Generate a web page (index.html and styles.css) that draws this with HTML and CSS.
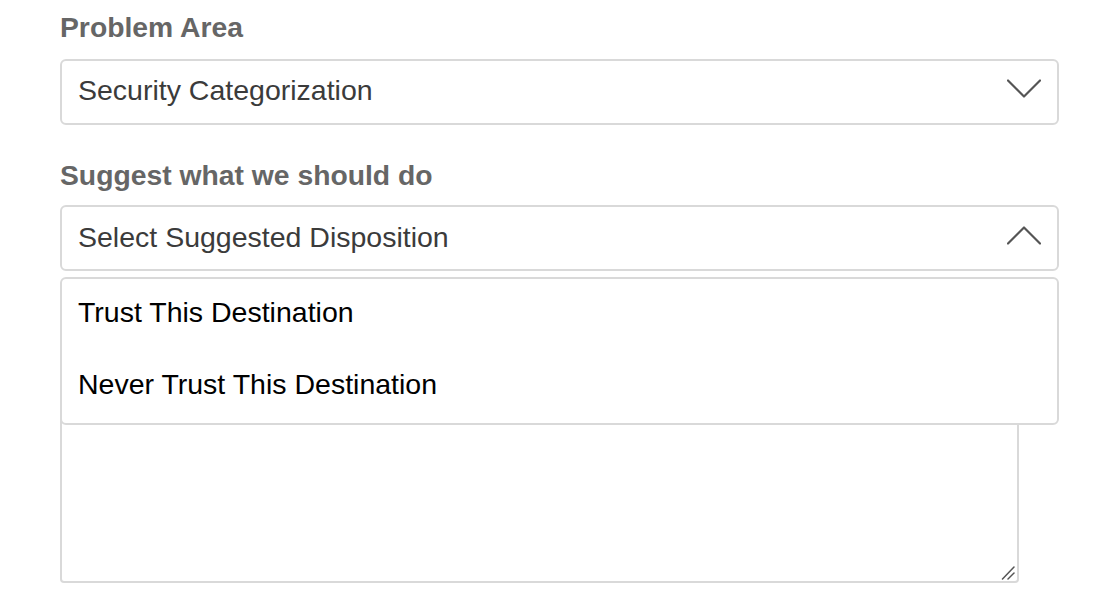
FILE: index.html
```html
<!DOCTYPE html>
<html lang="en">
<head>
<meta charset="utf-8">
<title>Feedback form</title>
<link rel="stylesheet" href="styles.css">
</head>
<body>
<form class="form">
  <div class="field">
    <div class="label">Problem Area</div>
    <div class="select">
      <span class="select-value">Security Categorization</span>
      <svg class="chev" width="34" height="19" viewBox="0 0 34 19"><polyline points="1,1.5 17,17.5 33,1.5" fill="none" stroke="#555" stroke-width="2.2" stroke-linecap="round" stroke-linejoin="round"/></svg>
    </div>
  </div>
  <div class="field field-2">
    <div class="label">Suggest what we should do</div>
    <div class="select-wrap">
      <div class="select open">
        <span class="select-value">Select Suggested Disposition</span>
        <svg class="chev" width="34" height="19" viewBox="0 0 34 19"><polyline points="1,17.5 17,1.5 33,17.5" fill="none" stroke="#555" stroke-width="2.2" stroke-linecap="round" stroke-linejoin="round"/></svg>
      </div>
      <ul class="menu">
        <li class="menu-item">Trust This Destination</li>
        <li class="menu-item">Never Trust This Destination</li>
      </ul>
    </div>
  </div>
  <div class="textarea-wrap">
    <textarea class="textarea"></textarea>
    <svg class="grip" width="16" height="16" viewBox="0 0 16 16"><line x1="1.5" y1="15" x2="13" y2="3" stroke="#555" stroke-width="1.5" stroke-linecap="round"/><line x1="7" y1="15" x2="13" y2="9" stroke="#555" stroke-width="1.5" stroke-linecap="round"/></svg>
  </div>
</form>
</body>
</html>
```

FILE: styles.css
```css
* { box-sizing: border-box; }

html, body {
  margin: 0;
  padding: 0;
  background: #ffffff;
}

body {
  font-family: "Liberation Sans", Arial, Helvetica, sans-serif;
}

.form {
  padding: 11px 0 0 60px;
  width: 1059px;
}

.label {
  font-size: 28.3px;
  line-height: 32px;
  font-weight: 700;
  color: #666666;
  margin-bottom: 16px;
}

.field-2 {
  margin-top: 34px;
}

.field-2 .label {
  margin-bottom: 14px;
}

.select-wrap {
  position: relative;
}

.select {
  display: flex;
  align-items: center;
  justify-content: space-between;
  height: 66px;
  width: 999px;
  padding: 0 16px 4px 16px;
  border: 2px solid #d9d9d9;
  border-radius: 6px;
  background: #ffffff;
  font-size: 28.5px;
  color: #3b3b3b;
}

.select.open {
  padding-bottom: 2px;
}

.chev {
  display: block;
  margin-bottom: 4px;
}

.menu {
  position: absolute;
  top: calc(100% + 6px);
  left: 0;
  width: 999px;
  margin: 0;
  padding: 0;
  list-style: none;
  background: #ffffff;
  border: 2px solid #d9d9d9;
  border-radius: 6px;
  z-index: 10;
}

.menu-item {
  height: 72px;
  display: flex;
  align-items: center;
  padding: 0 0 6px 16px;
  font-size: 28.5px;
  color: #000000;
}

.textarea-wrap {
  position: relative;
  width: 959px;
  margin-top: 30px;
}

.textarea {
  display: block;
  width: 959px;
  height: 282px;
  border: 2px solid #d9d9d9;
  border-radius: 4px;
  resize: none;
  outline: none;
  background: #ffffff;
  font-family: inherit;
}

.grip {
  position: absolute;
  right: 2px;
  bottom: 3px;
}
```
